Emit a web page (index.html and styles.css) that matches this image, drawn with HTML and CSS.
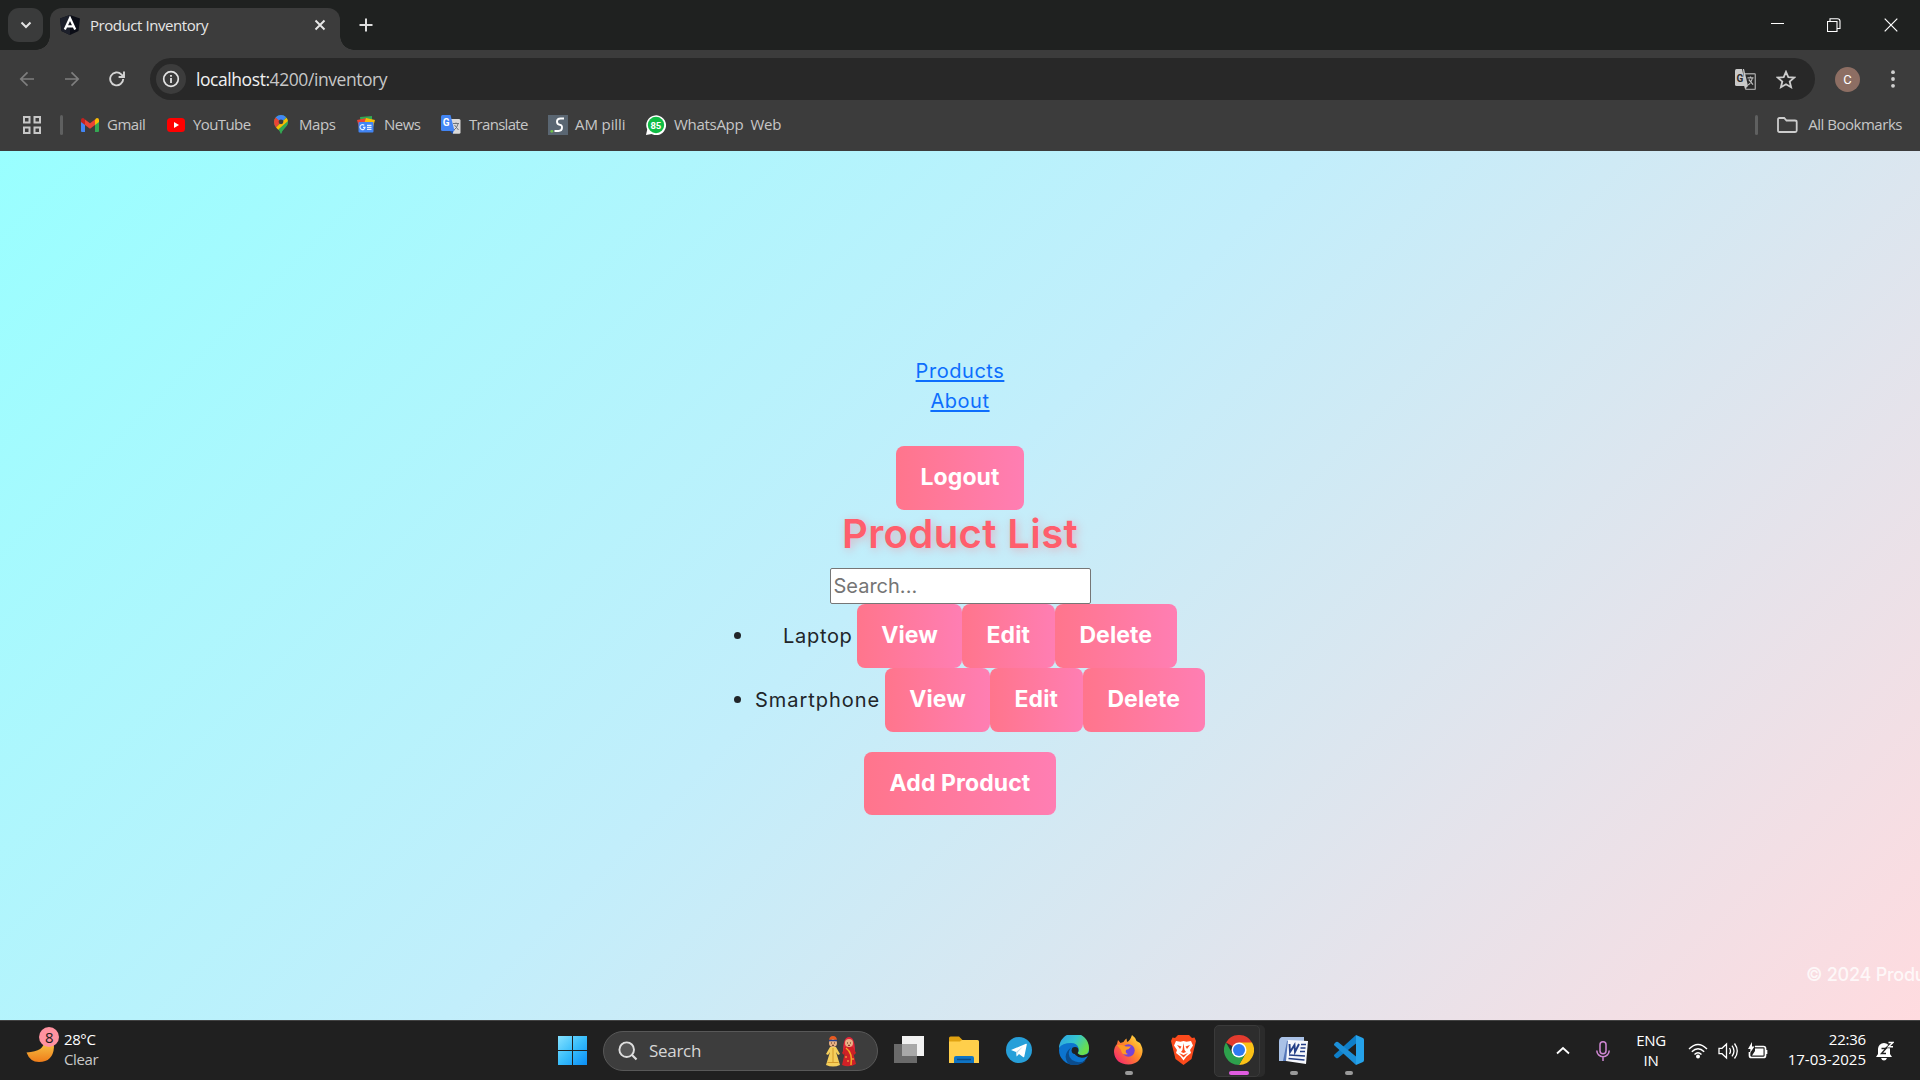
FILE: index.html
```html
<!DOCTYPE html>
<html lang="en">
<head>
<meta charset="utf-8">
<title>Product Inventory</title>
<link rel="stylesheet" href="styles.css">
</head>
<body>
<div class="screen">
  <header class="tabstrip">
    <div class="tab-search"><svg width="12" height="8" viewBox="0 0 12 8"><path d="M1.5 1.5 6 6l4.500-4.500" fill="none" stroke="#e3e3e3" stroke-width="2"/></svg></div>
    <div class="tab">
      <svg width="20" height="20" viewBox="0 0 20 20"><path d="M10 0 20 3.500 18.500 16 10 20 1.500 16 0 3.500z" fill="#0b0d16"/><path d="M0 3.500 10 0V20L1.500 16z" fill="#1d202b"/><path d="M4.800 14.500 10 3.200l5.200 11.300M7 11.300h6" fill="none" stroke="#fff" stroke-width="2.300"/></svg>
      <span class="tab-title">Product Inventory</span>
      <svg class="tab-close" width="12" height="12" viewBox="0 0 12 12"><path d="m1.500 1.500 9 9m0-9-9 9" stroke="#e8e8e8" stroke-width="1.900"/></svg>
    </div>
    <svg class="new-tab" width="14" height="14" viewBox="0 0 14 14"><path d="M7 .5v13M.5 7h13" stroke="#dedede" stroke-width="2"/></svg>
    <div class="window-controls">
      <svg width="14" height="14" viewBox="0 0 14 14"><path d="M1 5.500h13" stroke="#fff"/></svg>
      <svg width="14" height="14" viewBox="0 0 14 14"><path d="M.5 3.500h9.500v10H.5zM3 3.500V.800h7.500q2.500 0 2.500 2.500v7.200h-3" fill="none" stroke="#fff" stroke-width="1.100"/></svg>
      <svg width="14" height="14" viewBox="0 0 14 14"><path d="m.700.700 12.600 12.600m0-12.600L.7 13.300" stroke="#fff" stroke-width="1.200"/></svg>
    </div>
  </header>

  <nav class="toolbar">
    <svg class="nav-icon" width="16" height="16" viewBox="0 0 16 16"><path d="M15 8H2M8.500 1.300 1.800 8l6.700 6.700" fill="none" stroke="#7e7e7e" stroke-width="1.700"/></svg>
    <svg class="nav-icon" width="16" height="16" viewBox="0 0 16 16"><path d="M1 8h13M7.500 1.300 14.200 8l-6.700 6.700" fill="none" stroke="#7e7e7e" stroke-width="1.700"/></svg>
    <svg class="nav-icon" width="16" height="16" viewBox="0 0 16 16"><path d="M14.200 8a6.500 6.500 0 1 1-1.900-4.700L15 6M15 .500V6H9.600" fill="none" stroke="#d4d4d4" stroke-width="1.900"/></svg>
    <div class="omnibox">
      <div class="site-info"><svg width="18" height="18" viewBox="0 0 18 18"><circle cx="9" cy="9" r="7.300" fill="none" stroke="#e3e3e3" stroke-width="1.700"/><path d="M9 8v5M9 5v1.800" stroke="#e3e3e3" stroke-width="1.800"/></svg></div>
      <span class="url"><b>localhost:</b>4200/inventory</span>
      <svg class="omni-translate" width="21" height="21" viewBox="0 0 21 21"><path d="M9 4.800h10.500q.8 0 .8.800v14q0 .8-.8.800H11L9 15" fill="none" stroke="#9c9c9c" stroke-width="1.400"/><path d="M1.500 0H7l4 17H1.500Q0 17 0 15.500v-14Q0 0 1.500 0z" fill="#c9c9c9"/><path d="M8 0h1l4 17-3 3z" fill="#c9c9c9"/><text x="1.500" y="12.800" class="glyph-g" fill="#2b2b2b">G</text><path d="M12.500 8.800h6M15.500 7.500v1.300M17.300 9q-1 5-4.300 7M13.800 10.500l4.200 5.200" fill="none" stroke="#bdbdbd" stroke-width="1.200"/></svg>
      <svg class="star" width="20" height="19" viewBox="0 0 20 19"><path d="m10 1.800 2.300 5.300 5.900.5-4.500 3.900 1.400 5.700-5.100-3-5.100 3 1.400-5.700L1.800 7.600l5.900-.5z" fill="none" stroke="#cdcdcd" stroke-width="1.800"/></svg>
    </div>
    <div class="avatar">C</div>
    <svg class="kebab" width="4" height="18" viewBox="0 0 4 18"><g fill="#d0d0d0"><circle cx="2" cy="2.200" r="1.900"/><circle cx="2" cy="9" r="1.900"/><circle cx="2" cy="15.800" r="1.900"/></g></svg>
  </nav>

  <nav class="bookmarks">
    <svg class="apps" width="18" height="18" viewBox="0 0 18 18"><path d="M1 1h5.500v5.500H1zM11.500 1H17v5.500h-5.500zM1 11.500h5.500V17H1zM11.500 11.500H17V17h-5.500z" fill="none" stroke="#c7c7c7" stroke-width="2"/></svg>
    <i class="separator"></i>
    <div class="bookmark-list">
      <span class="bookmark"><svg width="18" height="14" viewBox="0 0 18 14"><path d="M0 2v11q0 1 1 1h3V5z" fill="#4285f4"/><path d="M18 2v11q0 1-1 1h-3V5z" fill="#34a853"/><path d="M14 1.500V7l4-3V2q0-2-2-2-1 0-2 1.500" fill="#fbbc04"/><path d="M0 2v2l4 3V1.500Q3 0 2 0 0 0 0 2" fill="#c5221f"/><path d="m4 1.500 5 3.700 5-3.700V7l-5 3.800L4 7z" fill="#ea4335"/></svg><span class="t-gmail">Gmail</span></span>
      <span class="bookmark"><svg width="18" height="14" viewBox="0 0 18 14"><rect width="18" height="14" rx="3.500" fill="#f00"/><path d="m7 4 5 3-5 3z" fill="#fff"/></svg><span class="t-youtube">YouTube</span></span>
      <span class="bookmark"><svg width="14" height="19" viewBox="0 0 14 19"><path d="M7 0a7 7 0 0 1 7 7c0 5-5.500 6-7 12C5.500 13 0 12 0 7a7 7 0 0 1 7-7" fill="#34a853"/><path d="M1.600 2.500A7 7 0 0 1 12 2.200L7 8z" fill="#4285f4"/><path d="M1.600 2.500 7 7 2 12.500Q0 10 0 7q0-3 1.600-4.500" fill="#ea4335"/><path d="M2 12.400 12.500 2.800Q14 5 14 7L4.500 15z" fill="#fbbc04"/><path d="M4.300 14.500 14 6q.300 4-3.500 7.300Q8 16 7 19q-.5-2-2.700-4.500" fill="#34a853"/><circle cx="7" cy="6.800" r="2.400" fill="#3c3c3c"/></svg><span class="t-maps">Maps</span></span>
      <span class="bookmark"><svg width="18" height="17" viewBox="0 0 18 17"><path d="m3 1 12-1v8H4z" fill="#34a853"/><path d="m0 4 10-2 2 6-10 3z" fill="#ea4335"/><path d="m18 4-9-2-2 6 9 3z" fill="#fbbc04"/><rect x="1.500" y="6" width="15" height="10.500" rx="1" fill="#4285f4"/><path d="M7.300 9.300a2.500 2.500 0 1 0 .7 2H6M10 9.300h4.500M10 11.300h4.500M10 13.300h4.500" fill="none" stroke="#e8f0fe" stroke-width="1.200"/></svg><span class="t-news">News</span></span>
      <span class="bookmark"><svg width="20" height="19" viewBox="0 0 20 19"><path d="M8 4h10q1.500 0 1.500 1.500v12q0 1.300-1.500 1.300h-6z" fill="#d9d9d9"/><path d="m9 16 4-1-1.500 4z" fill="#1a4fb0"/><path d="M1.500 0h8l4 16H1.500Q0 16 0 14.500v-13Q0 0 1.500 0" fill="#4285f4"/><text x="1.800" y="11" class="glyph-g" fill="#fff">G</text><path d="M12 8.500h6M15 7.500v1M17 9q-1 4-4 6M13.500 10l4 5" fill="none" stroke="#6b747c"/></svg><span class="t-translate">Translate</span></span>
      <span class="bookmark"><svg width="20" height="20" viewBox="0 0 20 20"><path d="M0 0h20v20H0z" fill="#5a6672"/><path d="M16 3.500h-3.500q-3.500 0-3.500 3t2.800 3.300q2.500.2 2.200 3.200t-3.500 3H6.500" fill="none" stroke="#fff" stroke-width="1.900"/><circle cx="3.800" cy="16.300" r="1.400" fill="#6fc04a"/></svg><span class="t-am">AM pilli</span></span>
      <span class="bookmark"><svg width="20" height="20" viewBox="0 0 20 20"><path d="M0 20 1.200 14.500A9.900 9.900 0 1 1 5.500 19z" fill="#fff"/><circle cx="10" cy="10" r="8.200" fill="#10bd45"/><text x="4.600" y="13.600" class="glyph-85" fill="#fff">85</text></svg><span class="t-whatsapp">WhatsApp&nbsp; Web</span></span>
    </div>
    <i class="separator"></i>
    <svg class="folder" width="21" height="16" viewBox="0 0 21 16"><path d="M1 2.500Q1 1 2.500 1h4.700l2.300 2.500H18q1.700 0 1.700 1.500v8.500q0 1.500-1.500 1.500H2.500Q1 15 1 13.500z" fill="none" stroke="#cdcdcd" stroke-width="1.800"/></svg>
    <span class="t-all">All Bookmarks</span>
  </nav>

  <main class="page">
    <div class="content">
      <div class="links"><a href="#" class="t-products">Products</a><a href="#" class="t-about">About</a></div>
      <button class="btn logout">Logout</button>
      <h1>Product List</h1>
      <input class="search" type="text" placeholder="Search...">
      <ul class="products">
        <li><span class="name laptop">Laptop</span><button class="btn view">View</button><button class="btn edit">Edit</button><button class="btn delete">Delete</button></li>
        <li><span class="name phone">Smartphone</span><button class="btn view">View</button><button class="btn edit">Edit</button><button class="btn delete">Delete</button></li>
      </ul>
      <button class="btn add">Add Product</button>
    </div>
    <footer class="footer">© 2024 Produ</footer>
  </main>

  <footer class="taskbar">
    <div class="weather">
      <svg width="34" height="36" viewBox="0 0 34 36"><defs><linearGradient id="moon" x2="0" y2="1"><stop stop-color="#f7c948"/><stop offset="1" stop-color="#ef7d1a"/></linearGradient></defs><path d="M18 14q1 10-17.500 11.500Q4 35 13 35q14 0 15-15l-1-6z" fill="url(#moon)"/><circle cx="23" cy="10" r="10" fill="#ff92a0"/><text x="19" y="15.500" class="badge" fill="#1c1c1c">8</text></svg>
      <div class="weather-text"><span>28°C</span><span class="dim">Clear</span></div>
    </div>
    <div class="apps-row">
      <svg class="start" width="29" height="29" viewBox="0 0 29 29"><defs><linearGradient id="win" x2="1" y2="1"><stop stop-color="#86e2ff"/><stop offset=".5" stop-color="#38bdfb"/><stop offset="1" stop-color="#0a8df5"/></linearGradient></defs><path d="M0 0h14v14H0zM15 0h14v14H15zM0 15h14v14H0zM15 15h14v14H15z" fill="url(#win)"/></svg>
      <div class="task-search">
        <svg width="20" height="20" viewBox="0 0 20 20"><circle cx="8.700" cy="8.700" r="7.300" fill="#555" stroke="#dedede" stroke-width="1.900"/><path d="m13.800 13.800 4.700 4.700" stroke="#dedede" stroke-width="2.200"/></svg>
        <span>Search</span>
        <svg class="dolls" width="32" height="32" viewBox="0 0 32 32"><path d="M5 12h6l4 7-2 1-2-3 4 13q-7 3-14 0l4-13-2 3-2-1z" fill="#f5cf5b"/><path d="M2.500 27.500h11M8 13v15" stroke="#d49a2a"/><circle cx="8" cy="8" r="4" fill="#e9b184"/><path d="M4 6q0-5 4-5t4 5l-4-2z" fill="#e85a20"/><path d="M4 5.500h8" stroke="#24408f" stroke-width="1.500"/><path d="M6 8h1m2 0h1M7 10.300h2" stroke="#5c2f1d"/><path d="M18 17q0-15 6-15t6 15z" fill="#e3263b"/><circle cx="24" cy="8" r="4" fill="#e9b184"/><path d="M22 8h1m2 0h1M23 10.300h2" stroke="#5c2f1d"/><path d="M20 12h8l3 6-2 2-1-3 3 12q-7 4-14 1l3-13-1 3-2-2z" fill="#cf2026"/><path d="M21 13q7 5 5 17" fill="none" stroke="#f5a623" stroke-width="1.500"/><g fill="#ffd34d"><circle cx="21" cy="22" r=".8"/><circle cx="23" cy="26" r=".8"/><circle cx="28" cy="24" r=".8"/></g></svg>
      </div>
      <div class="app"><svg width="30" height="30" viewBox="0 0 30 30"><path d="M0 9h23v19H0z" fill="#6a6a6a"/><path d="M8 1h22v20H8z" fill="#f2f2f2"/><path d="M8 9h15v12H8z" fill="#a8a8a8"/></svg></div>
      <div class="app"><svg width="30" height="28" viewBox="0 0 30 28"><path d="M0 2q0-1.500 1.500-1.500H10L13.500 4H28v8H0z" fill="#e0a211"/><path d="M0 5.500h11L13 4h15.500Q30 4 30 5.500V27H0z" fill="#ffcf4b"/><path d="M5 27v-5q0-2 2-2h16q2 0 2 2v5z" fill="#0f74c4"/><path d="M8 23.500h14" stroke="#0a4a84" stroke-width="1.500"/></svg></div>
      <div class="app"><svg width="26" height="26" viewBox="0 0 26 26"><circle cx="13" cy="13" r="13" fill="#279fd9"/><path d="m5 13 15-6.200q1-.3.800.8l-2.500 12q-.3 1-1.300.3L13 17l-2.300 2.500L10 15z" fill="#fff"/><path d="m10 15 7-5.500-5.500 6-.8 4z" fill="#b9d7e8"/></svg></div>
      <div class="app"><svg width="30" height="30" viewBox="0 0 30 30"><defs><linearGradient id="edge" x2="1" y2=".5"><stop stop-color="#2b9ee8"/><stop offset=".55" stop-color="#35c5cf"/><stop offset="1" stop-color="#69df4c"/></linearGradient></defs><circle cx="15" cy="15" r="15" fill="#0c74cf"/><path d="M0 13A15 15 0 0 1 30 13.500q0 6-6 6.500-5 0-5.500-2 2-2 1-5Q18 8 12 8 3 8 0 13" fill="url(#edge)"/><path d="M12 12.500q-5 7.500 1 12.500 6 4 14 .5A15 15 0 0 1 9 28.500Q3 20 12 12.500" fill="#0b4c8d"/><path d="M30 19.500q-1 1.500-2 2-7 3-11.500-1.500-2.500-3-.5-6l2.500 4q2 3 6.500 2 3-.300 5-2.500v2" fill="#202020"/><circle cx="16" cy="15.500" r="3.400" fill="#202020"/></svg></div>
      <div class="app running"><svg width="29" height="30" viewBox="0 0 29 30"><defs><linearGradient id="fox" x1="1" x2="0" y2="1"><stop stop-color="#fff14a"/><stop offset=".45" stop-color="#ff8a26"/><stop offset="1" stop-color="#f4147b"/></linearGradient></defs><path d="M18 0q3 2 4.500 6L26 8q3 5 2.500 9-2 12-14 12.500Q1 29 0 17q0-5 3-8l1-4 2.500 3 3-1Q11 4 12.500 3.500L13 7q3-1 5-7" fill="url(#fox)"/><circle cx="14.500" cy="15.500" r="6.200" fill="#7543d7"/><path d="M3 10q5-1 9 1.500h5q-2 3-5 3.500-1 3 2 4-6 2-7-4" fill="#ff9a24"/></svg></div>
      <div class="app"><svg width="25" height="30" viewBox="0 0 25 30"><path d="M7 0h11l3 3 2.500-.5L25 6l-1 4-3.500 14-8 6-8-6L1 10 0 6l1.500-3.500L4 3z" fill="#fb4a1c"/><path d="m5 6 4.500.8 3-.8 3 .8L20 6l2 4.500-3 4.500 1 3-4.500 3.500-3 4-3-4L5 18l1-3-3-4.500z" fill="#fff"/><path d="m6 10 4.500 1.500L9 14zM19 10l-4.500 1.500L16 14zM12.500 8l1 7 1.500 2-2.500 1-2.500-1 1.500-2zM8 18l4.500 2L17 18l-4.500 4.500z" fill="#fb4a1c"/></svg></div>
      <div class="app active"><svg width="30" height="30" viewBox="0 0 30 30"><path d="M15 15 2 7.500A15 15 0 0 1 28 7.500z" fill="#e33b2e"/><path d="M28 7.500H15l6.500 11.200L15 30A15 15 0 0 0 28 7.500" fill="#fbc116"/><path d="m2 7.500 6.500 11.200L15 22l6.500-3.300L15 30A15 15 0 0 1 2 7.500" fill="#2da14c"/><circle cx="15" cy="15" r="7.500" fill="#fff"/><circle cx="15" cy="15" r="6" fill="#2f7af0"/></svg></div>
      <div class="app running"><svg width="29" height="29" viewBox="0 0 29 29"><path d="M3 1h22v24H0V6q0-4 3-5" fill="#5476b8"/><path d="M3 1h22v4H8L4 25H0V6q0-4 3-5" fill="#a9c1e6"/><path d="m9 4 20 1-2 23-20-3z" fill="#f5f7fb"/><path d="m10.500 8 .5 8 4.500-7 .5 7 4-8" fill="none" stroke="#243f87" stroke-width="1.900"/><path d="M22 8.500h5M21.500 12h5M21 15.500h5M10 19l16 1M9.500 22.500l16 1.500" fill="none" stroke="#243f87" stroke-width="1.700"/></svg></div>
      <div class="app running"><svg width="30" height="30" viewBox="0 0 30 30"><path d="m22 0 7 3q1 .5 1 2v20q0 1.500-1 2l-7 3z" fill="#25a2ea"/><path d="M22 0v8.500L4 23q-1 .7-2 0L.5 21.500q-1-1 0-2z" fill="#0f7fc9"/><path d="M22 30v-8.500L4 7Q3 6.300 2 7L.5 8.500q-1 1 0 2z" fill="#1c8fd8"/></svg></div>
    </div>
    <div class="tray">
      <svg width="14" height="9" viewBox="0 0 14 9"><path d="m1 7.500 6-5.500 6 5.500" fill="none" stroke="#fff" stroke-width="1.800"/></svg>
      <svg width="14" height="20" viewBox="0 0 14 20"><rect x="4" y=".8" width="6" height="12" rx="3" fill="none" stroke="#cf87d3" stroke-width="1.500"/><path d="M.8 9.500a6.200 6.200 0 0 0 12.400 0M7 16v4" fill="none" stroke="#cf87d3" stroke-width="1.500"/></svg>
      <div class="lang"><span>ENG</span><span>IN</span></div>
      <svg width="20" height="16" viewBox="0 0 20 16"><path d="M1 6q9-9 18 0M3.800 8.800q6.200-6.200 12.400 0M6.500 11.500q3.500-3.500 7 0" fill="none" stroke="#fff" stroke-width="1.400"/><circle cx="10" cy="13.500" r="2" fill="#fff"/></svg>
      <svg width="20" height="18" viewBox="0 0 20 18"><path d="M1 6.300h3L8.500 2v14L4 11.700H1zM11.500 6q2 3 0 6M14 3.700q4 5.300 0 10.600M16.500 1.500q5.500 7.500 0 15" fill="none" stroke="#fff" stroke-width="1.300"/></svg>
      <svg width="20" height="18" viewBox="0 0 20 18"><path d="M7 4.500h8.500q2 0 2 2v7q0 2-2 2h-12q-2 0-2-2V10M18.500 8v4" fill="none" stroke="#fff" stroke-width="1.700"/><path d="M7 6.500h8.500v7H4L7 9z" fill="#fff"/><path d="M4 0 0 7h2.500L2 11l4.500-6.500H4z" fill="#fff"/></svg>
      <div class="clock"><span>22:36</span><span class="date">17-03-2025</span></div>
      <svg width="18" height="20" viewBox="0 0 18 20"><path d="M8 2a6 6 0 0 1 6 6v5l2 3H0l2-3V8a6 6 0 0 1 6-6M5 17h6q-1 2.500-3 2.500T5 17" fill="#fff"/><path d="M5.500 7.500H10l-4.500 5H10" fill="none" stroke="#202020" stroke-width="1.400"/><path d="M12.500 1.500H17l-4.500 4.300H17" fill="none" stroke="#202020" stroke-width="3"/><path d="M12.500 1.500H17l-4.500 4.300H17" fill="none" stroke="#fff" stroke-width="1.400"/></svg>
    </div>
  </footer>
</div>
</body>
</html>
```
FILE: styles.css
```css
* { box-sizing: border-box; }
body { margin: 0; font-family: "Open Sans", "Noto Sans", sans-serif; }
svg { display: block; flex: none; }
.screen { width: 1920px; height: 1080px; overflow: hidden; display: flex; flex-direction: column; background: #3c3c3c; }

/* Browser chrome */
.tabstrip { height: 50px; flex: none; background: #1f2120; display: flex; align-items: center; padding-left: 8px; }
.tab-search { position: relative; z-index: 1; width: 35px; height: 34px; border-radius: 11px; background: #3a3b3b; display: flex; align-items: center; justify-content: center; }
.tab { position: relative; width: 290px; height: 42px; margin: 8px 0 0 7px; padding: 0 14px 8px 10px; border-radius: 12px 12px 0 0; background: #3c3c3c; display: flex; align-items: center; }
.tab::before, .tab::after { content: ""; position: absolute; bottom: 0; width: 14px; height: 14px; }
.tab::before { left: -14px; background: radial-gradient(circle at 0 0, #1f2120 13.5px, #3c3c3c 14px); }
.tab::after { right: -14px; background: radial-gradient(circle at 100% 0, #1f2120 13.5px, #3c3c3c 14px); }
.tab-title { margin-left: 10px; font-size: 15px; letter-spacing: -0.44px; color: #e6e6e6; white-space: nowrap; }
.tab-close { margin-left: auto; }
.new-tab { margin-left: 19px; }
.window-controls { margin-left: auto; display: flex; gap: 43px; padding-right: 22px; }

.toolbar { height: 50px; flex: none; display: flex; align-items: center; padding: 8px 23px 0 19px; background: #3c3c3c; }
.nav-icon { margin-right: 29px; }
.nav-icon + .nav-icon + .nav-icon { margin-right: 25px; }
.omnibox { width: 1665px; height: 42px; border-radius: 21px; background: #282828; display: flex; align-items: center; padding: 0 19px 0 6px; }
.site-info { width: 30px; height: 30px; border-radius: 50%; background: #3c3c3c; display: flex; align-items: center; justify-content: center; }
.url { margin-left: 10px; font-size: 17.5px; letter-spacing: -0.43px; color: #c7c7c7; }
.url b { font-weight: 400; color: #f1f1f1; }
.omni-translate { margin-left: auto; }
.star { margin-left: 20px; }
.avatar { margin-left: 20px; width: 25px; height: 25px; border-radius: 50%; background: #8d6e63; color: #fff; font: 13px/25px Roboto, sans-serif; text-align: center; }
.kebab { margin-left: 31px; }
.glyph-g { font: 700 10px Roboto, sans-serif; }
.glyph-85 { font: 700 9.5px Roboto, sans-serif; }

.bookmarks { height: 51px; flex: none; display: flex; align-items: center; padding: 0 18px 2px 23px; font-size: 15px; letter-spacing: -0.3px; color: #c7c7c7; white-space: nowrap; }
.bookmarks span span, .t-all { margin-top: -1px; }
.separator { width: 3px; height: 20px; border-radius: 2px; background: #5f6060; }
.apps { margin-right: 19px; }
.bookmark-list { flex: 1; margin-left: 18px; display: grid; grid-template-columns: 86px 107px 83px 84px 107px 98px 150px; }
.bookmark { display: flex; align-items: center; gap: 8px; }
.folder { margin: 0 10px 0 19px; }
.t-gmail { letter-spacing: -0.5px; }
.t-youtube { letter-spacing: -0.6px; }
.t-maps { margin-left: 3px; letter-spacing: -0.4px; }
.t-news { margin-left: 1px; letter-spacing: -0.5px; }
.t-translate { letter-spacing: -0.7px; }
.t-am { margin-left: -1px; letter-spacing: -0.1px; }
.t-all { letter-spacing: -0.47px; }

/* Inventory page */
.page { height: 869px; flex: none; position: relative; display: flex; justify-content: center; overflow: hidden; font-family: Inter, sans-serif; font-size: 20px; color: #212529; background: linear-gradient(135deg, #99ffff, #c2eefb 47%, #ffdbdf); }
.content { display: flex; flex-direction: column; align-items: center; padding-top: 205px; }
.links { height: 90px; display: flex; flex-direction: column; align-items: center; line-height: 30px; }
.links a { color: #0d6efd; text-decoration-thickness: 2px; text-underline-offset: 2px; letter-spacing: 0.55px; }
.btn { height: 64px; border: 0; border-radius: 8px; padding: 0 0 2px; background: linear-gradient(to right, #ff758c, #ff7eb3); color: #fff; font: 700 23px Inter, sans-serif; letter-spacing: 0.1px; }
.logout { width: 128px; }
h1 { margin: 0; height: 58px; line-height: 48px; font-size: 40px; font-weight: 600; letter-spacing: 0.4px; color: #ff5e6c; text-shadow: 2px 2px 10px rgba(255, 94, 108, .4); }
.search { width: 261px; height: 36px; border: 1px solid #767676; border-radius: 2px; padding: 1px 3px; background: #fff; font: 20px Inter, sans-serif; }
.search::placeholder { color: #757575; opacity: 1; }
.products { width: 490px; margin: 0; padding: 0 0 0 40px; list-style: none; }
.products li { position: relative; height: 64px; display: flex; align-items: center; justify-content: center; }
.products li::before { content: ""; position: absolute; left: -21px; top: 28px; width: 7px; height: 7px; border-radius: 50%; background: #212529; }
.name { white-space: nowrap; }
.laptop { width: 74px; letter-spacing: 0.7px; }
.phone { width: 130px; letter-spacing: 0.95px; }
.view { width: 105px; }
.edit { width: 92.500px; }
.delete { width: 122.500px; }
.add { width: 192px; height: 63px; margin-top: 20px; }
.footer { position: absolute; left: 1806px; bottom: 31px; font-size: 18px; line-height: 28px; font-weight: 500; letter-spacing: -0.25px; color: rgba(255, 255, 255, .8); white-space: nowrap; }

/* Windows taskbar */
.taskbar { height: 60px; flex: none; display: flex; background: #202020; border-top: 1px solid #424242; color: #fff; font-size: 15px; line-height: 20px; }
.weather { width: 558px; display: flex; padding: 6px 0 0 26px; }
.weather-text { display: flex; flex-direction: column; margin: 2px 0 0 4px; letter-spacing: -0.4px; }
.dim { color: #c9c9c9; }
.badge { font: 15px "Open Sans", sans-serif; }
.apps-row { width: 985px; display: flex; align-items: center; }
.task-search { width: 275px; height: 40px; margin: 0 3px 0 16px; border: 1px solid #585858; border-radius: 20px; background: #3d3d3d; display: flex; align-items: center; padding: 0 20px 0 14px; font-size: 17px; letter-spacing: -0.3px; color: #d6d6d6; }
.task-search span { margin-left: 11px; }
.dolls { margin-left: auto; }
.app { position: relative; width: 55px; height: 51px; display: flex; align-items: center; justify-content: center; }
.app svg { margin-top: -1px; }
.running::after, .active::after { content: ""; position: absolute; left: 24px; bottom: 1px; width: 8px; height: 4px; border-radius: 2px; background: #9a9a9a; }
.active::after { left: 18px; width: 20px; background: #e05ce0; }
.active::before { content: ""; position: absolute; left: 3px; top: 0; width: 44px; height: 50px; border: 1px solid #3a3a3a; border-radius: 5px; background: #2d2d2d; box-shadow: 5px 0 0 #2b2b2b; }
.active svg { position: relative; }
.tray { display: grid; grid-template-columns: 40px 40px 60px 30px 30px 30px 93px 38px; align-items: center; justify-items: center; }
.lang { display: flex; flex-direction: column; align-items: center; padding: 0 4px 2px 0; letter-spacing: -0.3px; }
.clock { display: flex; flex-direction: column; align-items: flex-end; justify-self: end; padding-bottom: 3px; letter-spacing: -0.2px; }
.date { letter-spacing: 0; }
```
